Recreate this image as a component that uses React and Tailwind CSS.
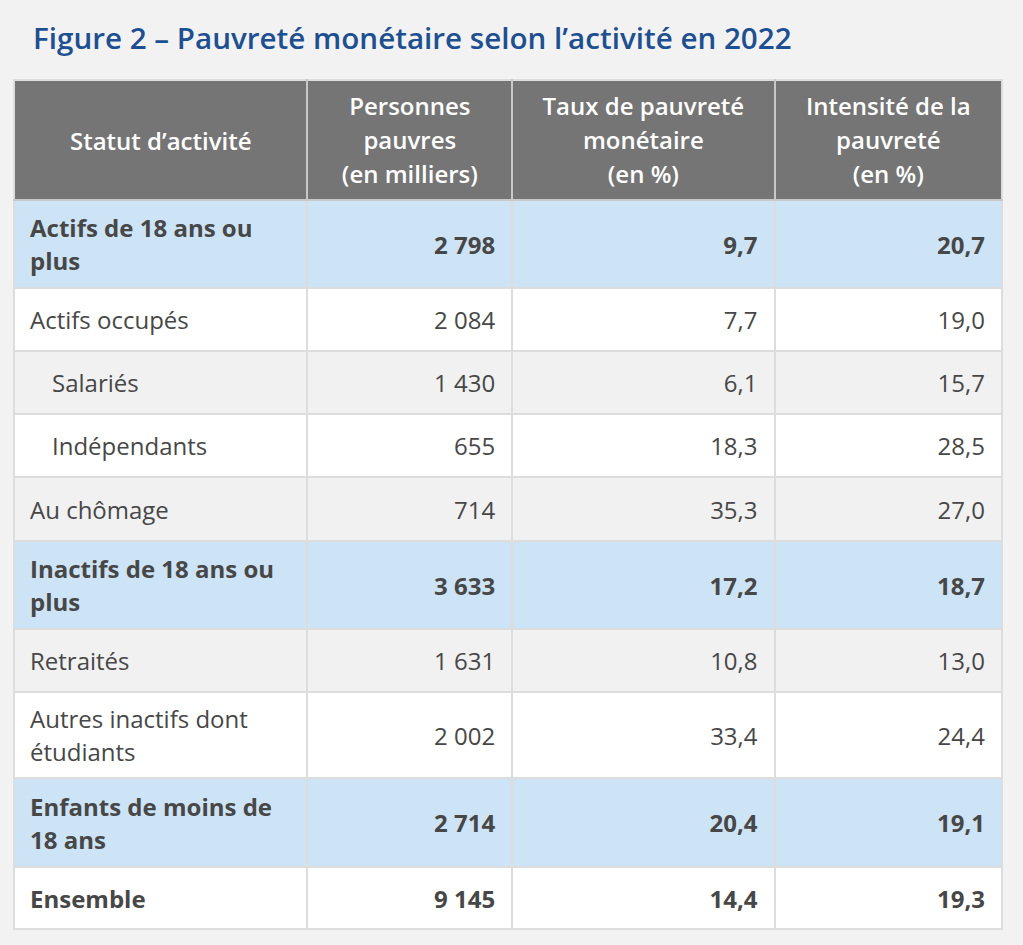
import React from "react";

const rows = [
  { label: "Actifs de 18 ans ou plus", values: ["2 798", "9,7", "20,7"], kind: "group", h: "h-[88px]" },
  { label: "Actifs occupés", values: ["2 084", "7,7", "19,0"], kind: "white", h: "h-[63px]" },
  { label: "Salariés", values: ["1 430", "6,1", "15,7"], kind: "gray", indent: true, h: "h-[63px]" },
  { label: "Indépendants", values: ["655", "18,3", "28,5"], kind: "white", indent: true, h: "h-[63px]" },
  { label: "Au chômage", values: ["714", "35,3", "27,0"], kind: "gray", h: "h-[64px]" },
  { label: "Inactifs de 18 ans ou plus", values: ["3 633", "17,2", "18,7"], kind: "group", h: "h-[88px]" },
  { label: "Retraités", values: ["1 631", "10,8", "13,0"], kind: "gray", h: "h-[63px]" },
  { label: "Autres inactifs dont étudiants", values: ["2 002", "33,4", "24,4"], kind: "white", h: "h-[86px]" },
  { label: "Enfants de moins de 18 ans", values: ["2 714", "20,4", "19,1"], kind: "group", h: "h-[89px]" },
  { label: "Ensemble", values: ["9 145", "14,4", "19,3"], kind: "total", h: "h-[62px]" },
];

const rowBg = {
  group: "bg-[#cde3f6] font-bold",
  white: "bg-white",
  gray: "bg-[#f1f1f1]",
  total: "bg-white font-bold",
};

function App() {
  return (
    <div className="min-h-screen bg-[#f2f2f2] font-['Open_Sans',sans-serif] text-[#474747]">
      <h1 className="pl-[33px] pt-[19px] pb-[22px] text-[29.6px] leading-[38px] font-semibold text-[#1d4f91]">
        Figure 2 – Pauvreté monétaire selon l’activité en 2022
      </h1>

      <div className="pl-[13px]">
        <table className="w-[990px] border-collapse border-2 border-[#dddddd] text-[24px] leading-[33px]">
          <colgroup>
            <col className="w-[294px]" />
            <col className="w-[205px]" />
            <col className="w-[263px]" />
            <col className="w-[228px]" />
          </colgroup>
          <thead>
            <tr className="h-[120px] bg-[#757575] text-white font-semibold">
              <th className="border-2 border-[#c8c8c8] border-t-[#dddddd] border-l-[#dddddd] px-4 font-semibold">
                Statut d’activité
              </th>
              <th className="border-2 border-[#c8c8c8] border-t-[#dddddd] px-4 leading-[34px] font-semibold">
                Personnes
                <br />
                pauvres
                <br />
                (en milliers)
              </th>
              <th className="border-2 border-[#c8c8c8] border-t-[#dddddd] px-4 leading-[34px] font-semibold">
                Taux de pauvreté
                <br />
                monétaire
                <br />
                (en %)
              </th>
              <th className="border-2 border-[#c8c8c8] border-t-[#dddddd] border-r-[#dddddd] px-4 leading-[34px] font-semibold">
                Intensité de la
                <br />
                pauvreté
                <br />
                (en %)
              </th>
            </tr>
          </thead>
          <tbody>
            {rows.map((row) => (
              <tr key={row.label} className={`${rowBg[row.kind]} ${row.h}`}>
                <td
                  className={`border-2 border-[#dddddd] pr-4 text-left ${
                    row.indent ? "pl-[37px]" : "pl-[15px]"
                  }`}
                >
                  {row.label}
                </td>
                {row.values.map((v, i) => (
                  <td key={i} className="border-2 border-[#dddddd] px-4 text-right">
                    {v}
                  </td>
                ))}
              </tr>
            ))}
          </tbody>
        </table>
      </div>
    </div>
  );
}

export default App;
